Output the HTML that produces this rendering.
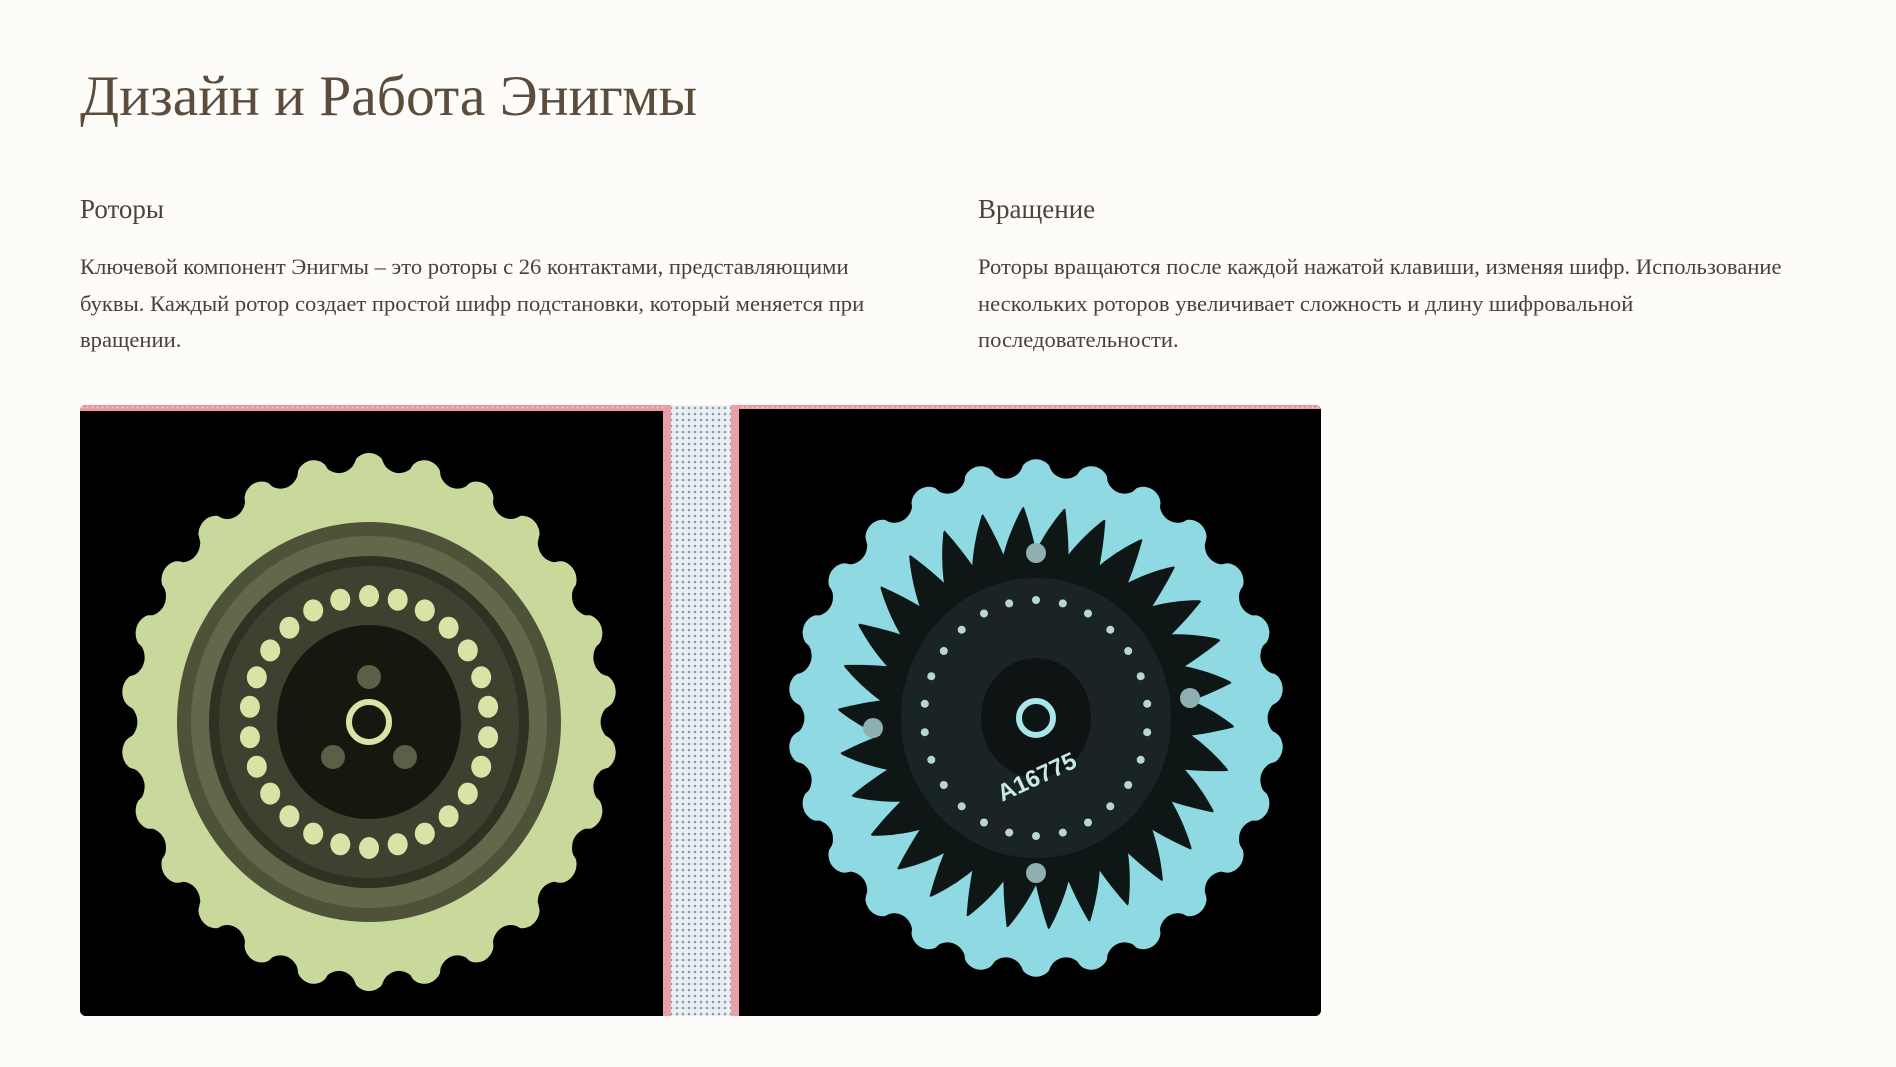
<!DOCTYPE html>
<html><head><meta charset="utf-8">
<style>
html,body{margin:0;padding:0;background:#fdfcf9;width:1896px;height:1067px;overflow:hidden}
body{font-family:"Liberation Serif","Noto Serif CJK SC",serif;color:#4a4036;position:relative}
h1{position:absolute;left:80px;top:62px;margin:0;font-weight:normal;font-size:57.5px;color:#5b4c3c;line-height:70px;white-space:nowrap}
h2{position:absolute;margin:0;font-weight:normal;font-size:27px;color:#4e4338;line-height:34px;white-space:nowrap}
.p{position:absolute;font-size:22.6px;line-height:36.6px;color:#4a4036;white-space:nowrap}
#img{position:absolute;left:80px;top:405px;width:1241px;height:611px;border-radius:6px;overflow:hidden;background:#000}
</style></head><body>
<h1>Дизайн и Работа Энигмы</h1>
<h2 style="left:80px;top:192px">Роторы</h2>
<h2 style="left:978px;top:192px">Вращение</h2>
<div class="p" style="left:80px;top:249px">Ключевой компонент Энигмы – это роторы с 26 контактами, представляющими<br>буквы. Каждый ротор создает простой шифр подстановки, который меняется при<br>вращении.</div>
<div class="p" style="left:978px;top:249px">Роторы вращаются после каждой нажатой клавиши, изменяя шифр. Использование<br>нескольких роторов увеличивает сложность и длину шифровальной<br>последовательности.</div>
<div id="img">
<svg id="s" width="1241" height="611" viewBox="0 0 1241 611" xmlns="http://www.w3.org/2000/svg">
<defs>
<pattern id="dots" width="6" height="6" patternUnits="userSpaceOnUse"><rect width="6" height="6" fill="#e8eef2"/><circle cx="3" cy="3" r="1.3" fill="#8a9aaa"/></pattern>
<pattern id="pdots" width="5" height="5" patternUnits="userSpaceOnUse"><rect width="5" height="5" fill="#e89aa0"/><circle cx="2.5" cy="2.5" r="1" fill="#f6d0d2"/></pattern>
</defs>
<rect width="1241" height="611" fill="#000"/>
<rect x="583" y="0" width="76" height="611" fill="url(#dots)"/>
<rect x="583" y="0" width="8" height="611" fill="#e8a0a6"/>
<rect x="651" y="0" width="8" height="611" fill="#e8a0a6"/>
<rect x="0" y="0" width="583" height="6" fill="url(#pdots)"/>
<rect x="659" y="0" width="582" height="4" fill="url(#pdots)"/>
<g id="g"></g>
</svg>
</div>
<script>
function gear(cx,cy,rx,ry,n,amp,col,sharp){
 let d='';
 for(let i=0;i<=720;i++){
  let t=i/720*Math.PI*2;
  let w=Math.cos(t*n);
  if(sharp){let f=((t*n/(2*Math.PI))%1);w=f<0.7?(f/0.7)*2-1:1-((f-0.7)/0.3)*2;}
  else{w=Math.sign(w)*Math.pow(Math.abs(w),0.6);}
  let k=1+amp*w;
  let x=cx+rx*k*Math.sin(t),y=cy-ry*k*Math.cos(t);
  d+=(i?'L':'M')+x.toFixed(1)+' '+y.toFixed(1);
 }
 return '<path d="'+d+'Z" fill="'+col+'"/>';
}
let h='';
h+=gear(289,317,240,260,26,0.035,'#c9d89b');
h+='<ellipse cx="289" cy="317" rx="192" ry="200" fill="#4d5238"/>';
h+='<ellipse cx="289" cy="317" rx="178" ry="186" fill="#62684a"/>';
h+='<ellipse cx="289" cy="317" rx="160" ry="166" fill="#2e3222"/>';
h+='<ellipse cx="289" cy="317" rx="150" ry="156" fill="#3c4130"/>';
for(let i=0;i<26;i++){let a=i/26*Math.PI*2;h+='<ellipse cx="'+(289+120*Math.sin(a)).toFixed(1)+'" cy="'+(317-126*Math.cos(a)).toFixed(1)+'" rx="10" ry="11" fill="#d8e4a6"/>';}
h+='<ellipse cx="289" cy="317" rx="92" ry="97" fill="#15180f"/>';
h+='<circle cx="289" cy="317" r="20" fill="none" stroke="#d8e4a6" stroke-width="6"/>';
h+='<circle cx="289" cy="272" r="12" fill="#5a5f46"/><circle cx="253" cy="352" r="12" fill="#5a5f46"/><circle cx="325" cy="352" r="12" fill="#5a5f46"/>';
h+=gear(956,313,240,250,26,0.035,'#8fd9e2');
h+=gear(956,313,178,190,30,0.12,'#0f1616',true);
h+='<ellipse cx="956" cy="313" rx="135" ry="140" fill="#1b2424"/>';
for(let i=0;i<26;i++){let a=i/26*Math.PI*2;h+='<circle cx="'+(956+112*Math.sin(a)).toFixed(1)+'" cy="'+(313-118*Math.cos(a)).toFixed(1)+'" r="4" fill="#b9d6d6"/>';}
h+='<ellipse cx="956" cy="313" rx="55" ry="60" fill="#0e1414"/>';
h+='<circle cx="956" cy="313" r="17" fill="none" stroke="#a8e6ec" stroke-width="6"/>';
h+='<text x="956" y="380" fill="#c8e8ea" font-family="Liberation Sans,sans-serif" font-size="24" font-weight="bold" text-anchor="middle" transform="rotate(-25 956 370)">A16775</text>';
h+='<circle cx="956" cy="148" r="10" fill="#8fb0b0"/><circle cx="956" cy="468" r="10" fill="#8fb0b0"/><circle cx="793" cy="323" r="10" fill="#8fb0b0"/><circle cx="1110" cy="293" r="10" fill="#8fb0b0"/>';
document.getElementById('g').innerHTML=h;
</script>
</body></html>
